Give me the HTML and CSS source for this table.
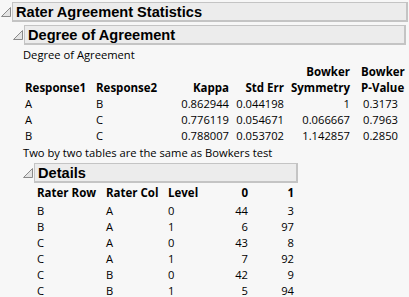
FILE: index.html
```html
<!DOCTYPE html>
<html>
<head>
<meta charset="utf-8">
<link rel="stylesheet" href="styles.css">
</head>
<body>
<div class="outline outer">
  <div class="ohead">
    <svg class="tri" width="10" height="10" viewBox="0 0 10 10"><polygon points="0.5,9.5 9.5,9.5 9.5,0.5" fill="#e4e4e4" stroke="#8a8a8a" stroke-width="1"/></svg>
    <div class="obox big">Rater Agreement Statistics</div>
  </div>
  <div class="obody l1">
    <div class="ohead">
      <svg class="tri" width="10" height="10" viewBox="0 0 10 10"><polygon points="0.5,9.5 9.5,9.5 9.5,0.5" fill="#e4e4e4" stroke="#8a8a8a" stroke-width="1"/></svg>
      <div class="obox big l1box">Degree of Agreement</div>
    </div>
    <div class="obody l2">
      <div class="caption">Degree of Agreement</div>
      <table class="t1">
        <thead>
          <tr><th class="lt c1"><br>Response1</th><th class="lt c2"><br>Response2</th><th class="c3"><br>Kappa</th><th class="c4"><br>Std Err</th><th class="c5">Bowker<br>Symmetry</th><th class="lt c6">Bowker<br>P-Value</th></tr>
        </thead>
        <tbody>
          <tr><td class="lt">A</td><td class="lt">B</td><td>0.862944</td><td>0.044198</td><td>1</td><td class="lt pv">0.3173</td></tr>
          <tr><td class="lt">A</td><td class="lt">C</td><td>0.776119</td><td>0.054671</td><td>0.066667</td><td class="lt pv">0.7963</td></tr>
          <tr><td class="lt">B</td><td class="lt">C</td><td>0.788007</td><td>0.053702</td><td>1.142857</td><td class="lt pv">0.2850</td></tr>
        </tbody>
      </table>
      <div class="note">Two by two tables are the same as Bowkers test</div>
      <div class="ohead">
        <svg class="tri" width="10" height="10" viewBox="0 0 10 10"><polygon points="0.5,9.5 9.5,9.5 9.5,0.5" fill="#e4e4e4" stroke="#8a8a8a" stroke-width="1"/></svg>
        <div class="obox big l2box">Details</div>
      </div>
      <table class="t2">
        <thead>
          <tr><th class="lt d1">Rater Row</th><th class="lt d2">Rater Col</th><th class="lt d3">Level</th><th class="d4">0</th><th class="d5">1</th></tr>
        </thead>
        <tbody>
          <tr><td class="lt">B</td><td class="lt">A</td><td class="lt">0</td><td>44</td><td>3</td></tr>
          <tr><td class="lt">B</td><td class="lt">A</td><td class="lt">1</td><td>6</td><td>97</td></tr>
          <tr><td class="lt">C</td><td class="lt">A</td><td class="lt">0</td><td>43</td><td>8</td></tr>
          <tr><td class="lt">C</td><td class="lt">A</td><td class="lt">1</td><td>7</td><td>92</td></tr>
          <tr><td class="lt">C</td><td class="lt">B</td><td class="lt">0</td><td>42</td><td>9</td></tr>
          <tr><td class="lt">C</td><td class="lt">B</td><td class="lt">1</td><td>5</td><td>94</td></tr>
        </tbody>
      </table>
    </div>
  </div>
</div>
</body>
</html>
```
FILE: styles.css
```css
html, body {
  margin: 0;
  padding: 0;
  background: #f7f7f7;
}
body {
  font-family: "Open Sans", "Noto Sans", sans-serif;
  font-size: 11.2px;
  color: #000;
  overflow: hidden;
}
.outer {
  padding: 2px 1px 0 1px;
}
.ohead {
  display: flex;
  align-items: center;
}
.tri {
  display: block;
  flex: none;
  margin-right: 1px;
}
.obox {
  flex: 1;
  height: 17px;
  background: #ececec;
  border-style: solid;
  border-color: #c4c4c4;
  border-width: 1px 2px 2px 1px;
  display: flex;
  align-items: center;
  padding-left: 3px;
}
.big {
  font-family: "Liberation Sans", Arial, sans-serif;
  font-weight: bold;
  font-size: 14.6px;
}
.l1 {
  padding: 3px 2px 0 12px;
}
.l2 {
  padding-left: 10px;
}
.caption {
  margin-top: 2px;
  line-height: 16px;
}
table {
  border-collapse: collapse;
}
th, td {
  padding: 0;
  line-height: 16px;
  text-align: right;
  white-space: nowrap;
  vertical-align: bottom;
}
th {
  font-weight: bold;
  font-size: 11.5px;
}
.lt { text-align: left; }
.t1 {
  margin: 1px 0 0 2px;
}
.c1 { width: 71px; }
.c2 { width: 79px; }
.c3 { width: 54px; }
.c4 { width: 55px; }
.c5 { width: 66px; }
.c6 { padding-left: 11px; }
.pv { padding-left: 13px; }
.note {
  line-height: 16px;
  margin-top: 1px;
}
.l2 .ohead {
  margin-top: 2px;
  width: 275px;
}
.t2 {
  margin: 2px 0 0 14px;
}
.t2 tbody tr:first-child td {
  padding-top: 2px;
}
.d1 { width: 69px; }
.d2 { width: 62px; }
.d3 { width: 35px; }
.d4 { width: 45px; }
.d5 { width: 46px; }
```
